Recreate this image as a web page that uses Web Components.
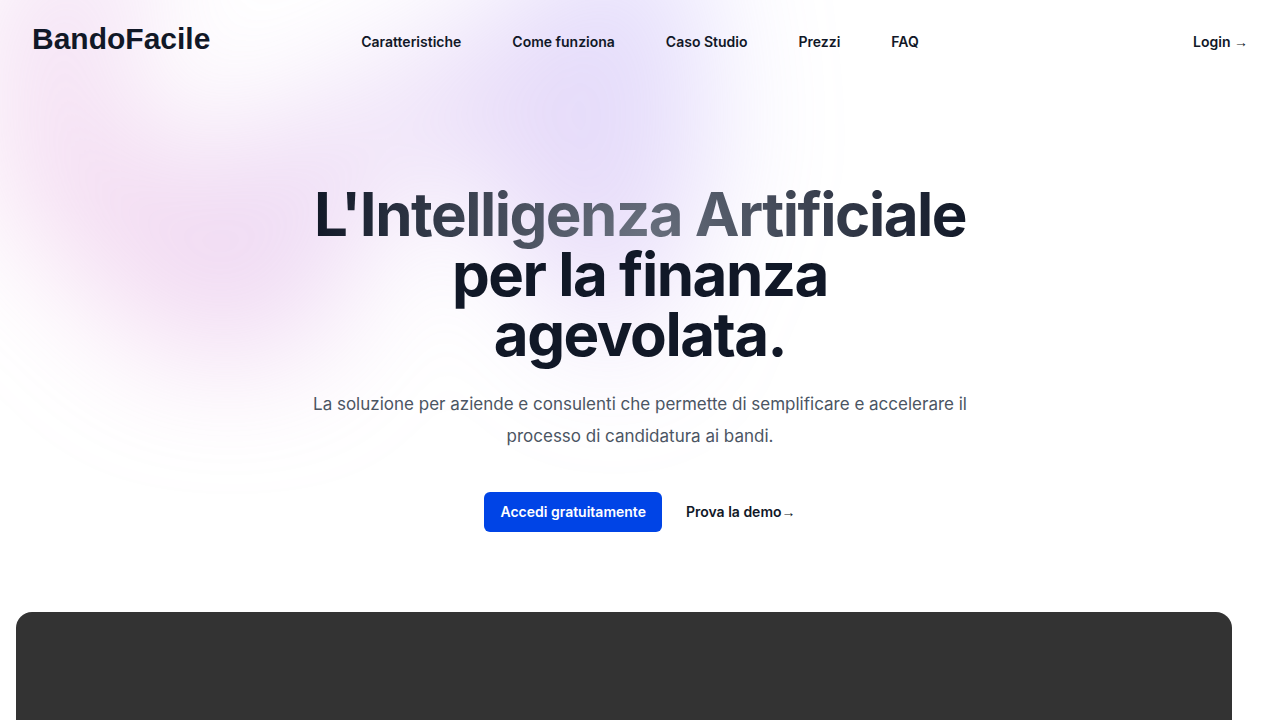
<!DOCTYPE html>
<html lang="it">
<head>
<meta charset="utf-8">
<meta name="viewport" content="width=device-width, initial-scale=1">
<title>BandoFacile</title>
<style>
  body {
    margin: 0;
    background: #fff;
    color: #111827;
    font-family: Inter, "Liberation Sans", sans-serif;
    line-height: 24px;
  }
  .arrow { font-family: "Liberation Sans", Arial, sans-serif; }
</style>
</head>
<body>
<bf-page>
  <bf-header slot="header">
    <bf-link href="#caratteristiche">Caratteristiche</bf-link>
    <bf-link href="#come-funziona">Come funziona</bf-link>
    <bf-link href="#caso-studio">Caso Studio</bf-link>
    <bf-link href="#prezzi">Prezzi</bf-link>
    <bf-link href="#faq">FAQ</bf-link>
    <bf-link slot="account" href="#login">Login <span class="arrow">→</span></bf-link>
  </bf-header>
  <bf-hero>
    <span slot="highlight">L'Intelligenza Artificiale</span>
    <span slot="title">per la finanza agevolata.</span>
    <span slot="lead">La soluzione per aziende e consulenti che permette di semplificare e accelerare il processo di candidatura ai bandi.</span>
    <bf-button slot="actions">Accedi gratuitamente</bf-button>
    <bf-link slot="actions" href="#demo">Prova la demo<span class="arrow">→</span></bf-link>
  </bf-hero>
  <bf-preview></bf-preview>
</bf-page>

<script>
  const define = (name, html) => {
    const template = document.createElement('template');
    template.innerHTML = html;
    customElements.define(name, class extends HTMLElement {
      constructor() {
        super();
        this.attachShadow({ mode: 'open' }).append(template.content.cloneNode(true));
      }
      connectedCallback() {
        const link = this.shadowRoot.querySelector('a[data-link]');
        if (link) link.href = this.getAttribute('href') || '#';
      }
    });
  };

  define('bf-page', `
    <style>
      :host { display: flex; flex-direction: column; min-height: 100vh; position: relative; isolation: isolate; }
    </style>
    <bf-glow></bf-glow>
    <slot name="header"></slot>
    <slot></slot>
  `);

  // Blurred pink-to-violet shape behind the header and the hero.
  define('bf-glow', `
    <style>
      :host { display: block; position: absolute; inset: -320px 0 auto 0; z-index: -1; overflow: hidden; filter: blur(64px); pointer-events: none; }
      div {
        position: relative;
        left: calc(50% - 480px);
        width: 1155px;
        aspect-ratio: 1155 / 678;
        transform: translateX(-50%) rotate(30deg);
        background: linear-gradient(to top right, #ff80b5, #9089fc);
        opacity: .3;
        clip-path: polygon(74.1% 44.1%, 100% 61.6%, 97.5% 26.9%, 85.5% 0.1%, 80.7% 2%, 72.5% 32.5%, 60.2% 62.4%, 52.4% 68.1%, 47.5% 58.3%, 45.2% 34.5%, 27.5% 76.7%, 0.1% 64.9%, 17.9% 100%, 27.6% 76.8%, 76.1% 97.7%, 74.1% 44.1%);
      }
    </style>
    <div></div>
  `);

  define('bf-header', `
    <style>
      :host { display: block; padding: 24px 32px; }
      header { display: flex; align-items: center; min-height: 36px; }
      .side { flex: 1; display: flex; }
      .start { align-self: flex-start; }
      .end { justify-content: flex-end; }
      .logo { color: inherit; text-decoration: none; font: bold 30px/30px "Liberation Sans", Arial, sans-serif; }
      nav { display: flex; gap: 51px; }
    </style>
    <header>
      <div class="side start"><a class="logo" href="#">BandoFacile</a></div>
      <nav aria-label="Principale"><slot></slot></nav>
      <div class="side end"><slot name="account"></slot></div>
    </header>
  `);

  define('bf-link', `
    <style>
      :host { display: block; }
      a { display: block; color: inherit; text-decoration: none; font-size: 14px; line-height: 24px; font-weight: 600; white-space: nowrap; }
    </style>
    <a data-link href="#"><slot></slot></a>
  `);

  define('bf-button', `
    <style>
      :host { display: block; }
      button {
        display: block; border: 0; border-radius: 6px; padding: 10px 16px;
        background: #0044e6; color: #fff; cursor: pointer;
        font-family: inherit; font-size: 14px; line-height: 20px; font-weight: 600;
      }
    </style>
    <button type="button"><slot></slot></button>
  `);

  define('bf-hero', `
    <style>
      :host { display: block; padding: 100px 32px 80px; }
      section { max-width: 672px; margin: 0 auto; text-align: center; }
      h1 { margin: 0; font-size: 60px; line-height: 60px; font-weight: 700; letter-spacing: -0.025em; }
      .highlight {
        background: radial-gradient(circle at 50% 90%, #6b7280, #111827 330px);
        -webkit-background-clip: text; background-clip: text; color: transparent;
      }
      p { margin: 24px 0 0; font-size: 17px; line-height: 32px; color: #4b5563; }
      .actions { margin-top: 40px; display: flex; align-items: center; justify-content: center; gap: 24px; }
    </style>
    <section>
      <h1><span class="highlight"><slot name="highlight"></slot></span> <slot name="title"></slot></h1>
      <p><slot name="lead"></slot></p>
      <div class="actions"><slot name="actions"></slot></div>
    </section>
  `);

  define('bf-preview', `
    <style>
      :host { display: block; flex: 1; margin: 0 48px 0 16px; border-radius: 16px 16px 0 0; background: #333; }
    </style>
  `);
</script>
</body>
</html>
